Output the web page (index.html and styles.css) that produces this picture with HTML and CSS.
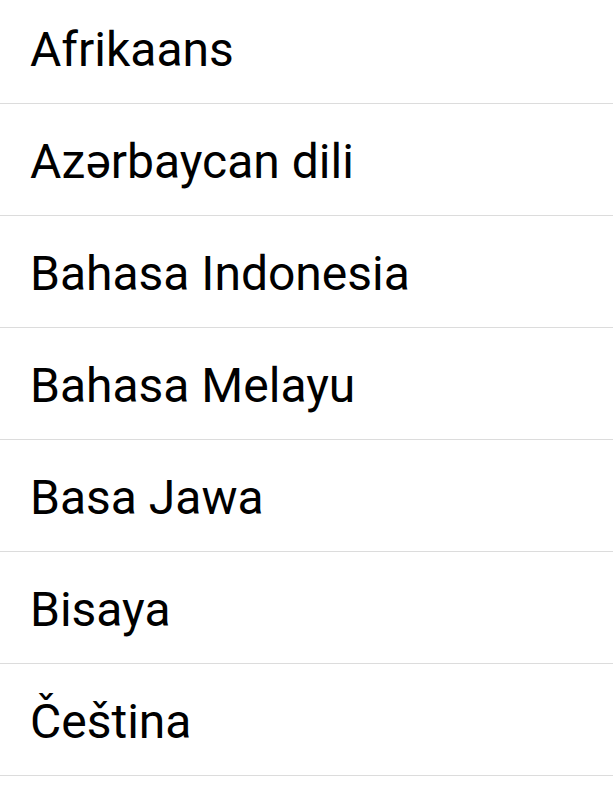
FILE: index.html
```html
<!DOCTYPE html>
<html>
<head>
<meta charset="utf-8">
<link rel="stylesheet" href="styles.css">
</head>
<body>
<ul class="list">
  <li class="item">Afrikaans</li>
  <li class="item">Azərbaycan dili</li>
  <li class="item">Bahasa Indonesia</li>
  <li class="item">Bahasa Melayu</li>
  <li class="item">Basa Jawa</li>
  <li class="item">Bisaya</li>
  <li class="item">Čeština</li>
</ul>
</body>
</html>
```

FILE: styles.css
```css
html, body {
  margin: 0;
  padding: 0;
  background: #fff;
  overflow: hidden;
}
.list {
  list-style: none;
  margin: -8px 0 0 0;
  padding: 0;
  font-family: Roboto, "Noto Sans", sans-serif;
}
.item {
  box-sizing: border-box;
  height: 112px;
  border-bottom: 1px solid #dcdcdc;
  padding: 30px 0 0 30px;
  font-size: 48px;
  line-height: 56px;
  color: #000;
}
```
